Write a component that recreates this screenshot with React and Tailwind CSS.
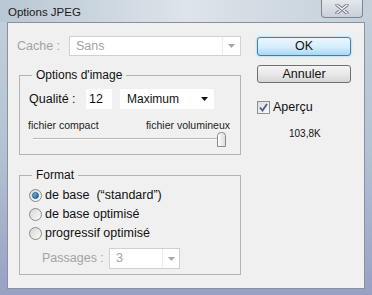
const Arrow = ({ color = "#a8a8a8" }) => (
  <svg width="7" height="4" viewBox="0 0 7 4">
    <path d="M0 0 H7 L3.5 4 Z" fill={color} />
  </svg>
)

const Radio = ({ checked }) => (
  <span className="relative w-[13px] h-[13px] rounded-full border border-[#8a8a8a] bg-gradient-to-br from-[#d6d6d6] to-[#fbfbfb] flex items-center justify-center shrink-0">
    {checked && (
      <span className="w-[7px] h-[7px] rounded-full bg-gradient-to-br from-[#7fc3ec] to-[#1b5b8c] border border-[#1d5a86]" />
    )}
  </span>
)

const GroupBox = ({ title, className, children }) => (
  <div className={`relative ml-[2px] w-[222px] border border-[#b2b2b2] ${className}`}>
    <span className="absolute left-[12px] top-[-8px] px-[4px] bg-[#f0f0f0] text-[12px] leading-[14px] text-[#111]">
      {title}
    </span>
    {children}
  </div>
)

export default function App() {
  return (
    <div className="w-[372px] h-[295px] overflow-hidden flex flex-col bg-gradient-to-b from-[#c3d0dd] via-[#b4c3d3] to-[#98a0c4] font-['Liberation_Sans',Arial,sans-serif] text-[#111]">
      {/* title bar */}
      <div className="h-[22px] flex items-start shrink-0 bg-gradient-to-r from-[#b9c6d3] via-[#dde4ea] to-[#c4cfd9]">
        <span className="pl-[8px] pt-[5px] text-[11.5px] leading-[14px] text-[#1a1a1a]">Options JPEG</span>
        <div className="ml-auto mr-[9px] w-[42px] h-[18px] rounded-b-[4px] border border-t-0 border-[#7c8591] bg-gradient-to-b from-[#e4e8ec] to-[#c9d0d8] flex items-center justify-center">
          <svg width="14" height="10" viewBox="0 0 14 10">
            <path d="M2 1 L12 9 M12 1 L2 9" stroke="#6b717a" strokeWidth="3.2" strokeLinecap="round" />
            <path d="M2 1 L12 9 M12 1 L2 9" stroke="#f6f7f8" strokeWidth="1.6" strokeLinecap="round" />
          </svg>
        </div>
      </div>

      {/* client area */}
      <div className="mx-[7px] h-[267px] shrink-0 border border-[#8792a0] bg-[#f0f0f0] flex pl-[9px] pt-[13px]">
        {/* left column */}
        <div className="w-[224px] flex flex-col">
          <div className="h-[20px] flex items-center">
            <span className="w-[52px] text-[12.5px] text-[#a3a3a3]">Cache :</span>
            <div className="w-[172px] h-[20px] border border-[#d0d0d0] bg-white flex">
              <span className="flex-1 pl-[6px] text-[12.5px] leading-[18px] text-[#a3a3a3]">Sans</span>
              <span className="w-[18px] border-l border-[#ececec] flex items-center justify-center">
                <Arrow />
              </span>
            </div>
          </div>

          <GroupBox title="Options d'image" className="mt-[19px] h-[80px]">
            <div className="flex items-center pl-[9px] pt-[13px]">
              <span className="w-[57px] text-[12.5px]">Qualité :</span>
              <span className="w-[26px] h-[20px] bg-white pl-[3px] text-[12.5px] leading-[20px]">12</span>
              <div className="ml-[8px] w-[94px] h-[20px] bg-white flex items-center pl-[7px] pr-[6px]">
                <span className="flex-1 text-[12px]">Maximum</span>
                <Arrow color="#111" />
              </div>
            </div>
            <div className="mt-[10px] flex justify-between pl-[8px] pr-[10px] text-[10.5px] leading-[13px] text-[#222]">
              <span>fichier compact</span>
              <span>fichier volumineux</span>
            </div>
            <div className="relative ml-[13px] w-[193px] h-[15px]">
              <div className="absolute left-0 right-[2px] top-[6px] h-[2px] border-t border-[#b5b5b5] border-b border-b-white" />
              <svg className="absolute right-0 top-0" width="9" height="15" viewBox="0 0 9 15">
                <defs>
                  <linearGradient id="th" x1="0" x2="1">
                    <stop offset="0" stopColor="#ffffff" />
                    <stop offset="1" stopColor="#dcdcdc" />
                  </linearGradient>
                </defs>
                <path d="M0.5 3.5 Q0.5 0.5 4.5 0.5 Q8.5 0.5 8.5 3.5 V14.5 H0.5 Z" fill="url(#th)" stroke="#8a8a8a" />
              </svg>
            </div>
          </GroupBox>

          <GroupBox title="Format" className="mt-[20px] h-[100px]">
            <div className="pl-[9px] pt-[10px] flex flex-col text-[12.5px]">
              <label className="h-[19px] flex items-center gap-[3px]">
                <Radio checked />
                <span className="whitespace-pre">de base  (“standard”)</span>
              </label>
              <label className="h-[19px] flex items-center gap-[3px]">
                <Radio />
                <span>de base optimisé</span>
              </label>
              <label className="h-[19px] flex items-center gap-[3px]">
                <Radio />
                <span>progressif optimisé</span>
              </label>
            </div>
            <div className="mt-[5px] pl-[22px] flex items-center">
              <span className="w-[67px] text-[12.5px] text-[#a3a3a3]">Passages :</span>
              <div className="w-[71px] h-[21px] border border-[#d0d0d0] bg-white flex">
                <span className="flex-1 pl-[6px] text-[12.5px] leading-[19px] text-[#a3a3a3]">3</span>
                <span className="w-[17px] border-l border-[#ececec] flex items-center justify-center">
                  <Arrow />
                </span>
              </div>
            </div>
          </GroupBox>
        </div>

        {/* right column */}
        <div className="ml-[16px] flex flex-col">
          <button className="mt-[1px] w-[94px] h-[19px] rounded-[3px] border border-[#3c7fb1] bg-gradient-to-b from-[#eaf6fd] via-[#d7effc] to-[#a7d9f5] shadow-[0_0_2px_#6fc2ee] text-[12.5px] leading-[17px] text-[#111]">
            OK
          </button>
          <button className="mt-[9px] w-[94px] h-[18px] rounded-[3px] border border-[#707070] bg-gradient-to-b from-[#f4f4f4] via-[#e9e9e9] to-[#d6d6d6] text-[12.5px] leading-[16px] text-[#111]">
            Annuler
          </button>
          <label className="mt-[15px] flex items-center">
            <span className="w-[13px] h-[13px] border border-[#8e8f8f] bg-gradient-to-br from-[#dcdcdc] to-[#fafafa] flex items-center justify-center">
              <svg width="9" height="9" viewBox="0 0 9 9">
                <path d="M1 4.5 L3.5 7.5 L8 1" stroke="#4a5f8a" strokeWidth="1.8" fill="none" />
              </svg>
            </span>
            <span className="ml-[3px] text-[12.5px]">Aperçu</span>
          </label>
          <span className="mt-[11px] ml-[32px] text-[10px] leading-[12px] text-[#111]">103,8K</span>
        </div>
      </div>
    </div>
  )
}
